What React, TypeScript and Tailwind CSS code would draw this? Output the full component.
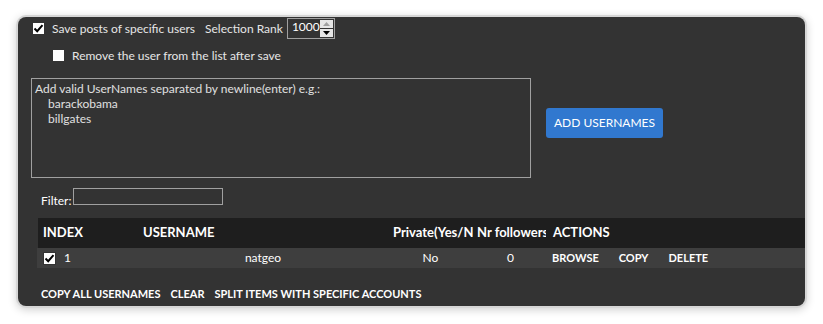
import React from "react";

const font = { fontFamily: '"Segoe UI", Lato, "Liberation Sans", sans-serif' };

function Check({ checked }: { checked: boolean }) {
  return (
    <span className="flex h-[13px] w-[13px] shrink-0 items-center justify-center border border-[#333] bg-white">
      {checked && (
        <svg width="11" height="11" viewBox="0 0 11 11">
          <path d="M1.5 5.5 L4.2 8.2 L9.5 2.2" fill="none" stroke="#000" strokeWidth="2" />
        </svg>
      )}
    </span>
  );
}

export default function App() {
  return (
    <div className="h-[324px] w-[823px] overflow-hidden bg-white pl-[18px] pt-[17px]" style={font}>
      <div className="flex h-[289px] w-[787px] flex-col overflow-hidden rounded-[8px] bg-[#333333] text-[12px] text-[#e6e6e6] shadow-[0_0_0_2px_#d6d6d6,0_2px_8px_2px_rgba(0,0,0,0.18)]">
        {/* row 1 */}
        <div className="flex h-[22px] items-center pl-[14px] pt-[1px]">
          <Check checked />
          <span className="ml-[7px] leading-none">Save posts of specific users</span>
          <span className="ml-[10px] leading-none">Selection Rank</span>
          <div className="ml-[4px] flex h-[21px] w-[48px] items-start border border-[#a0a0a0] bg-[#333]">
            <span className="ml-[4px] mt-[1px] flex-1 leading-[14px] text-white">1000</span>
            <div className="mr-[1px] mt-[1px] flex w-[15px] flex-col gap-[1px]">
              <div className="flex h-[8px] items-center justify-center bg-[#e6e6e6]">
                <svg width="7" height="4" viewBox="0 0 7 4"><path d="M0 4 L3.5 0 L7 4 Z" fill="#a0a0a0" /></svg>
              </div>
              <div className="flex h-[8px] items-center justify-center bg-[#e6e6e6]">
                <svg width="7" height="4" viewBox="0 0 7 4"><path d="M0 0 L3.5 4 L7 0 Z" fill="#000" /></svg>
              </div>
            </div>
          </div>
        </div>
        {/* row 2 */}
        <div className="mt-[10px] flex items-center pl-[34px]">
          <Check checked={false} />
          <span className="ml-[7px] leading-none">Remove the user from the list after save</span>
        </div>
        {/* textarea + button */}
        <div className="mt-[16px] flex items-start pl-[13px]">
          <div className="h-[100px] w-[500px] border border-[#a0a0a0] px-[3px] pt-[2px] leading-[15px] text-[#e0e0e0]">
            <div>Add valid UserNames separated by newline(enter) e.g.:</div>
            <div className="pl-[13px]">barackobama</div>
            <div className="pl-[13px]">billgates</div>
          </div>
          <button className="ml-[15px] mt-[30px] h-[30px] w-[117px] rounded-[3px] bg-[#3178cf] text-[12px] text-white">
            ADD USERNAMES
          </button>
        </div>
        {/* filter */}
        <div className="mt-[10px] flex items-end pl-[23px]">
          <span className="mb-[-2px] leading-none text-white">Filter:</span>
          <div className="ml-[2px] h-[17px] w-[150px] border border-[#a0a0a0]"></div>
        </div>
        {/* table */}
        <div className="ml-[20px] mt-[13px] flex h-[30px] items-center bg-[#1e1e1e] text-[13px] font-bold text-white">
          <div className="w-[100px] pl-[5px]">INDEX</div>
          <div className="w-[250px] pl-[5px]">USERNAME</div>
          <div className="w-[85px] overflow-hidden whitespace-nowrap pl-[5px]">Private(Yes/No)</div>
          <div className="w-[73px] overflow-hidden whitespace-nowrap pl-[4px]">Nr followers</div>
          <div className="pl-[7px]">ACTIONS</div>
        </div>
        <div className="ml-[19px] flex h-[20px] items-center bg-[#3e3e3e] text-white">
          <div className="flex w-[101px] items-center pl-[6px]">
            <Check checked />
            <span className="ml-[8px]">1</span>
          </div>
          <div className="w-[250px] text-center">natgeo</div>
          <div className="w-[85px] text-center">No</div>
          <div className="w-[75px] text-center">0</div>
          <div className="flex gap-[20px] pl-[4px] text-[11px] font-bold">
            <span>BROWSE</span>
            <span>COPY</span>
            <span>DELETE</span>
          </div>
        </div>
        {/* bottom actions */}
        <div className="mt-[18px] flex gap-[10px] pl-[23px] text-[11px] font-bold text-white">
          <span>COPY ALL USERNAMES</span>
          <span>CLEAR</span>
          <span>SPLIT ITEMS WITH SPECIFIC ACCOUNTS</span>
        </div>
      </div>
    </div>
  );
}
